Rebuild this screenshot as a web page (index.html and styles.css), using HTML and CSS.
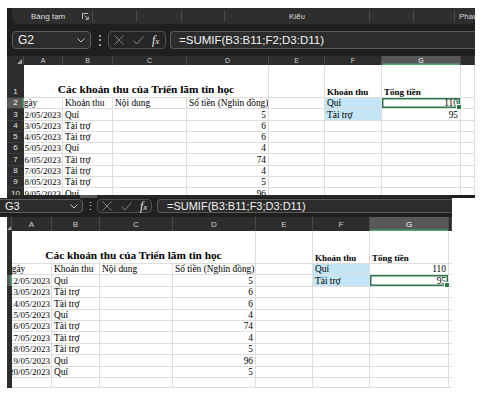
FILE: index.html
```html
<!DOCTYPE html>
<html lang="vi">
<head>
<meta charset="utf-8">
<title>SUMIF</title>
<link rel="stylesheet" href="styles.css">
</head>
<body>
<div class="win win-top">
  <div class="ribbon">
    <div class="rg g1"><span class="rlabel">Bảng tạm</span><svg class="launch" width="7" height="7" viewBox="0 0 7 7"><path d="M0.5 6V0.5H6" fill="none" stroke="#bdbdbd" stroke-width="1"/><path d="M2.5 2.5L6.3 6.3M6.3 3.5V6.3H3.5" fill="none" stroke="#bdbdbd" stroke-width="1"/></svg></div>
    <div class="rg g2"></div>
    <div class="rg g3"></div>
    <div class="rg g4"></div>
    <div class="rg g5"><span class="rlabel">Kiểu</span></div>
    <div class="rg g6"></div>
    <div class="rg g7"></div>
    <div class="rg g8"><span class="rlabel">Phầm</span></div>
  </div>
  <div class="fbar">
    <div class="namebox"><span>G2</span><svg width="8" height="5" viewBox="0 0 8 5"><path d="M0.5 0.5L4 4L7.5 0.5" fill="none" stroke="#c8c8c8" stroke-width="1"/></svg></div>
    <div class="dots">⋮</div>
    <div class="fxbox">
      <svg class="ic-x" width="10" height="10" viewBox="0 0 10 10"><path d="M0.5 0.5L9.5 9.5M9.5 0.5L0.5 9.5" stroke="#858585" stroke-width="1"/></svg>
      <svg class="ic-ok" width="11" height="9" viewBox="0 0 11 9"><path d="M0.5 4.5L3.8 8L10.5 0.5" fill="none" stroke="#858585" stroke-width="1"/></svg>
      <span class="fx">f<small>x</small></span>
    </div>
    <div class="finput">=SUMIF(B3:B11;F2;D3:D11)</div>
  </div>
  <div class="sheet">
    <div class="row hrow">
      <div class="hc corner"><span class="tri"></span></div><div class="hc">A</div><div class="hc">B</div><div class="hc">C</div><div class="hc">D</div><div class="hc">E</div><div class="hc">F</div><div class="hc hsel">G</div><div class="hc"></div>
    </div>
    <div class="row r1">
      <div class="rh">1</div><div class="c title">Các khoản thu của Triển lãm tin học</div><div class="c"></div><div class="c b">Khoản thu</div><div class="c b">Tổng tiền</div><div class="c"></div>
    </div>
    <div class="row">
      <div class="rh rsel">2</div><div class="c a lft"><span>Ngày</span></div><div class="c">Khoản thu</div><div class="c">Nội dung</div><div class="c">Số tiền (Nghìn đồng)</div><div class="c"></div><div class="c hl">Quí</div><div class="c n sel">110</div><div class="c"></div>
    </div>
    <div class="row">
      <div class="rh">3</div><div class="c a"><span>12/05/2023</span></div><div class="c">Quí</div><div class="c"></div><div class="c n">5</div><div class="c"></div><div class="c hl">Tài trợ</div><div class="c n">95</div><div class="c"></div>
    </div>
    <div class="row">
      <div class="rh">4</div><div class="c a"><span>13/05/2023</span></div><div class="c">Tài trợ</div><div class="c"></div><div class="c n">6</div><div class="c"></div><div class="c"></div><div class="c"></div><div class="c"></div>
    </div>
    <div class="row">
      <div class="rh">5</div><div class="c a"><span>14/05/2023</span></div><div class="c">Tài trợ</div><div class="c"></div><div class="c n">6</div><div class="c"></div><div class="c"></div><div class="c"></div><div class="c"></div>
    </div>
    <div class="row">
      <div class="rh">6</div><div class="c a"><span>15/05/2023</span></div><div class="c">Quí</div><div class="c"></div><div class="c n">4</div><div class="c"></div><div class="c"></div><div class="c"></div><div class="c"></div>
    </div>
    <div class="row">
      <div class="rh">7</div><div class="c a"><span>16/05/2023</span></div><div class="c">Tài trợ</div><div class="c"></div><div class="c n">74</div><div class="c"></div><div class="c"></div><div class="c"></div><div class="c"></div>
    </div>
    <div class="row">
      <div class="rh">8</div><div class="c a"><span>17/05/2023</span></div><div class="c">Tài trợ</div><div class="c"></div><div class="c n">4</div><div class="c"></div><div class="c"></div><div class="c"></div><div class="c"></div>
    </div>
    <div class="row">
      <div class="rh">9</div><div class="c a"><span>18/05/2023</span></div><div class="c">Tài trợ</div><div class="c"></div><div class="c n">5</div><div class="c"></div><div class="c"></div><div class="c"></div><div class="c"></div>
    </div>
    <div class="row">
      <div class="rh">10</div><div class="c a"><span>19/05/2023</span></div><div class="c">Quí</div><div class="c"></div><div class="c n">96</div><div class="c"></div><div class="c"></div><div class="c"></div><div class="c"></div>
    </div>
  </div>
  <div class="hscroll"><div class="track"><div class="thumb"></div></div></div>
</div>

<div class="win win-bot">
  <div class="fbar">
    <div class="namebox"><span>G3</span><svg width="8" height="5" viewBox="0 0 8 5"><path d="M0.5 0.5L4 4L7.5 0.5" fill="none" stroke="#c8c8c8" stroke-width="1"/></svg></div>
    <div class="dots">⋮</div>
    <div class="fxbox">
      <svg class="ic-x" width="10" height="10" viewBox="0 0 10 10"><path d="M0.5 0.5L9.5 9.5M9.5 0.5L0.5 9.5" stroke="#858585" stroke-width="1"/></svg>
      <svg class="ic-ok" width="11" height="9" viewBox="0 0 11 9"><path d="M0.5 4.5L3.8 8L10.5 0.5" fill="none" stroke="#858585" stroke-width="1"/></svg>
      <span class="fx">f<small>x</small></span>
    </div>
    <div class="finput">=SUMIF(B3:B11;F3;D3:D11)</div>
  </div>
  <div class="sheet">
    <div class="row hrow">
      <div class="hc corner"><span class="tri"></span></div><div class="hc">A</div><div class="hc">B</div><div class="hc">C</div><div class="hc">D</div><div class="hc">E</div><div class="hc">F</div><div class="hc hsel">G</div><div class="hc"></div>
    </div>
    <div class="row r1">
      <div class="rh"></div><div class="c title">Các khoản thu của Triển lãm tin học</div><div class="c"></div><div class="c b">Khoản thu</div><div class="c b">Tổng tiền</div><div class="c"></div>
    </div>
    <div class="row">
      <div class="rh"></div><div class="c a lft"><span>Ngày</span></div><div class="c">Khoản thu</div><div class="c">Nội dung</div><div class="c">Số tiền (Nghìn đồng)</div><div class="c"></div><div class="c hl">Quí</div><div class="c n">110</div><div class="c"></div>
    </div>
    <div class="row">
      <div class="rh rsel"></div><div class="c a"><span>12/05/2023</span></div><div class="c">Quí</div><div class="c"></div><div class="c n">5</div><div class="c"></div><div class="c hl">Tài trợ</div><div class="c n sel">95</div><div class="c"></div>
    </div>
    <div class="row">
      <div class="rh"></div><div class="c a"><span>13/05/2023</span></div><div class="c">Tài trợ</div><div class="c"></div><div class="c n">6</div><div class="c"></div><div class="c"></div><div class="c"></div><div class="c"></div>
    </div>
    <div class="row">
      <div class="rh"></div><div class="c a"><span>14/05/2023</span></div><div class="c">Tài trợ</div><div class="c"></div><div class="c n">6</div><div class="c"></div><div class="c"></div><div class="c"></div><div class="c"></div>
    </div>
    <div class="row">
      <div class="rh"></div><div class="c a"><span>15/05/2023</span></div><div class="c">Quí</div><div class="c"></div><div class="c n">4</div><div class="c"></div><div class="c"></div><div class="c"></div><div class="c"></div>
    </div>
    <div class="row">
      <div class="rh"></div><div class="c a"><span>16/05/2023</span></div><div class="c">Tài trợ</div><div class="c"></div><div class="c n">74</div><div class="c"></div><div class="c"></div><div class="c"></div><div class="c"></div>
    </div>
    <div class="row">
      <div class="rh"></div><div class="c a"><span>17/05/2023</span></div><div class="c">Tài trợ</div><div class="c"></div><div class="c n">4</div><div class="c"></div><div class="c"></div><div class="c"></div><div class="c"></div>
    </div>
    <div class="row">
      <div class="rh"></div><div class="c a"><span>18/05/2023</span></div><div class="c">Tài trợ</div><div class="c"></div><div class="c n">5</div><div class="c"></div><div class="c"></div><div class="c"></div><div class="c"></div>
    </div>
    <div class="row">
      <div class="rh"></div><div class="c a"><span>19/05/2023</span></div><div class="c">Quí</div><div class="c"></div><div class="c n">96</div><div class="c"></div><div class="c"></div><div class="c"></div><div class="c"></div>
    </div>
    <div class="row">
      <div class="rh"></div><div class="c a"><span>20/05/2023</span></div><div class="c">Quí</div><div class="c"></div><div class="c n">5</div><div class="c"></div><div class="c"></div><div class="c"></div><div class="c"></div>
    </div>
    <div class="row r12">
      <div class="rh"></div><div class="c"></div><div class="c"></div><div class="c"></div><div class="c"></div><div class="c"></div><div class="c"></div><div class="c"></div><div class="c"></div>
    </div>
  </div>
</div>
</body>
</html>
```

FILE: styles.css
```css
* { box-sizing: border-box; margin: 0; padding: 0; }

body {
  background: #ffffff;
  width: 485px;
  height: 397px;
  overflow: hidden;
  font-family: "Liberation Sans", Arial, sans-serif;
}

.win { display: flex; flex-direction: column; overflow: hidden; }

/* ---------- top window ---------- */
.win-top {
  margin: 8px 0 0 7px;
  width: 468px;
  height: 190px;
  background: #1f1f1f;
}

.ribbon {
  display: flex;
  height: 16px;
  margin: 0 0 6px 5px;
  background: #2e2e2e;
  border-radius: 0 0 6px 6px;
  flex-shrink: 0;
}

.rg {
  display: flex;
  align-items: center;
  margin: 2px 0;
  border-right: 1px solid #4a4a4a;
  flex-shrink: 0;
}
.g1 { width: 81px; padding-left: 19px; }
.g2 { width: 44px; }
.g3 { width: 45px; }
.g4 { width: 43px; }
.g5 { width: 145px; justify-content: center; }
.g6 { width: 44px; }
.g7 { width: 41px; }
.g8 { flex: 1; border-right: none; padding-left: 4px; }

.rlabel { font-size: 8px; color: #dcdcdc; white-space: nowrap; }
.launch { margin-left: auto; margin-right: 3px; }

.fbar {
  display: flex;
  align-items: flex-start;
  flex-shrink: 0;
}
.win-top .fbar { height: 22px; padding: 1px 0 0 5px; margin-bottom: 4px; }

.namebox {
  display: flex;
  align-items: center;
  justify-content: space-between;
  background: #2c2c2c;
  border: 1px solid #5e5e5e;
  border-radius: 4px;
  color: #f2f2f2;
  flex-shrink: 0;
}
.win-top .namebox { width: 79px; height: 18px; padding: 0 5px 0 5px; font-size: 12px; }

.dots { color: #cfcfcf; text-align: center; flex-shrink: 0; }
.win-top .dots { width: 17px; font-size: 12px; line-height: 18px; }

.fxbox {
  display: flex;
  align-items: center;
  border: 1px solid #4e4e4e;
  border-radius: 4px;
  background: #262626;
  flex-shrink: 0;
}
.win-top .fxbox { width: 58px; height: 18px; padding-left: 5px; }
.ic-x { margin-right: 9px; }
.ic-ok { margin-right: 8px; }
.fx {
  font-family: "Liberation Serif", "Times New Roman", serif;
  font-style: italic;
  font-size: 12px;
  color: #e6e6e6;
  line-height: 1;
}
.fx small { font-size: 9px; }

.finput {
  flex: 1;
  background: #2c2c2c;
  border: 1px solid #5a5a5a;
  border-right: none;
  border-radius: 4px 0 0 4px;
  color: #f2f2f2;
  white-space: nowrap;
  overflow: hidden;
}
.win-top .finput { height: 18px; margin-left: 4px; padding-left: 8px; font-size: 11.5px; line-height: 16px; }

.sheet { overflow: hidden; flex-shrink: 0; background: #1f1f1f; }
.win-top .sheet { height: 139px; }

.row { display: grid; }
.win-top .row { grid-template-columns: 17px 39px 50px 74px 82px 56px 57px 79px 14px; height: 11.3px; }
.win-top .hrow { height: 9px; }
.win-top .r1 { height: 33px; }

.hc {
  background: #2d2d2d;
  color: #d2d2d2;
  border-right: 1px solid #4b4b4b;
  display: flex;
  align-items: center;
  justify-content: center;
  font-size: 7px;
}
.win-bot .hc { font-size: 8px; }
.corner { position: relative; }
.tri {
  position: absolute;
  right: 1px;
  bottom: 1px;
  width: 0;
  height: 0;
  border-left: 5px solid transparent;
  border-bottom: 5px solid #a3a3a3;
}
.hsel { background: #585858; color: #ffffff; box-shadow: inset 0 -1.5px 0 #4fa46f; }

.rh {
  background: #2d2d2d;
  color: #e4e4e4;
  font-size: 8px;
  display: flex;
  align-items: flex-end;
  justify-content: center;
  border-bottom: 1px solid #3c3c3c;
  line-height: 10px;
}
.rsel { background: #5a5a5a; color: #ffffff; box-shadow: inset -1.5px 0 0 #4fa46f; }

.c {
  background: #ffffff;
  border-right: 1px solid #dedede;
  border-bottom: 1px solid #dedede;
  font-family: "Liberation Serif", "Times New Roman", serif;
  font-size: 9.4px;
  line-height: 10px;
  color: #000000;
  display: flex;
  align-items: flex-end;
  padding: 0 2px;
  white-space: nowrap;
  overflow: hidden;
}
.title {
  grid-column: span 4;
  justify-content: center;
  font-weight: bold;
  font-size: 11.3px;
  line-height: 12px;
  padding-bottom: 2px;
}
.b { font-weight: bold; font-size: 9px; }
.a { justify-content: flex-end; padding: 0 1px 0 0; font-size: 9px; }
.a span { flex-shrink: 0; }
.a.lft { justify-content: flex-start; font-size: 9.4px; }
.a.lft span { margin-left: -7px; }
.n { justify-content: flex-end; padding-right: 2px; }
.hl { background: #c3e5f5; }
.sel {
  position: relative;
  overflow: visible;
  box-shadow: inset 0 0 0 1.5px #2b7a4c;
}
.sel::after {
  content: "";
  position: absolute;
  right: -2px;
  bottom: -2px;
  width: 4px;
  height: 4px;
  background: #2b7a4c;
  border: 1px solid #ffffff;
  z-index: 2;
}

.hscroll { height: 3px; display: flex; flex-shrink: 0; }
.track { width: 445px; background: #262626; }
.thumb { width: 17px; height: 3px; margin-left: 73px; background: #575757; }

/* ---------- bottom window ---------- */
.win-bot {
  width: 452px;
  height: 190px;
}
.win-bot .fbar { height: 19px; background: #1f1f1f; padding-top: 1px; }
.win-bot .namebox { width: 87px; height: 14px; margin-left: -4px; padding: 0 4px 0 8px; font-size: 11px; }
.win-bot .dots { width: 14px; font-size: 11px; line-height: 14px; }
.win-bot .fxbox { width: 55px; height: 14px; padding-left: 4px; }
.win-bot .finput { height: 14px; margin-left: 5px; padding-left: 9px; font-size: 11px; line-height: 12px; }
.win-bot .sheet { margin-left: 7px; width: 445px; height: 171px; }
.win-bot .row { grid-template-columns: 5px 40px 48px 73px 83px 57px 57px 79px 3px; height: 11.4px; }
.win-bot .hrow { height: 14px; }
.win-bot .r1 { height: 33px; }
.win-bot .r12 { height: 10px; }
.win-bot .rh { border-bottom-color: #2d2d2d; }
.win-bot .corner .tri { right: 0; border-left-width: 4px; border-bottom-width: 4px; }
```
